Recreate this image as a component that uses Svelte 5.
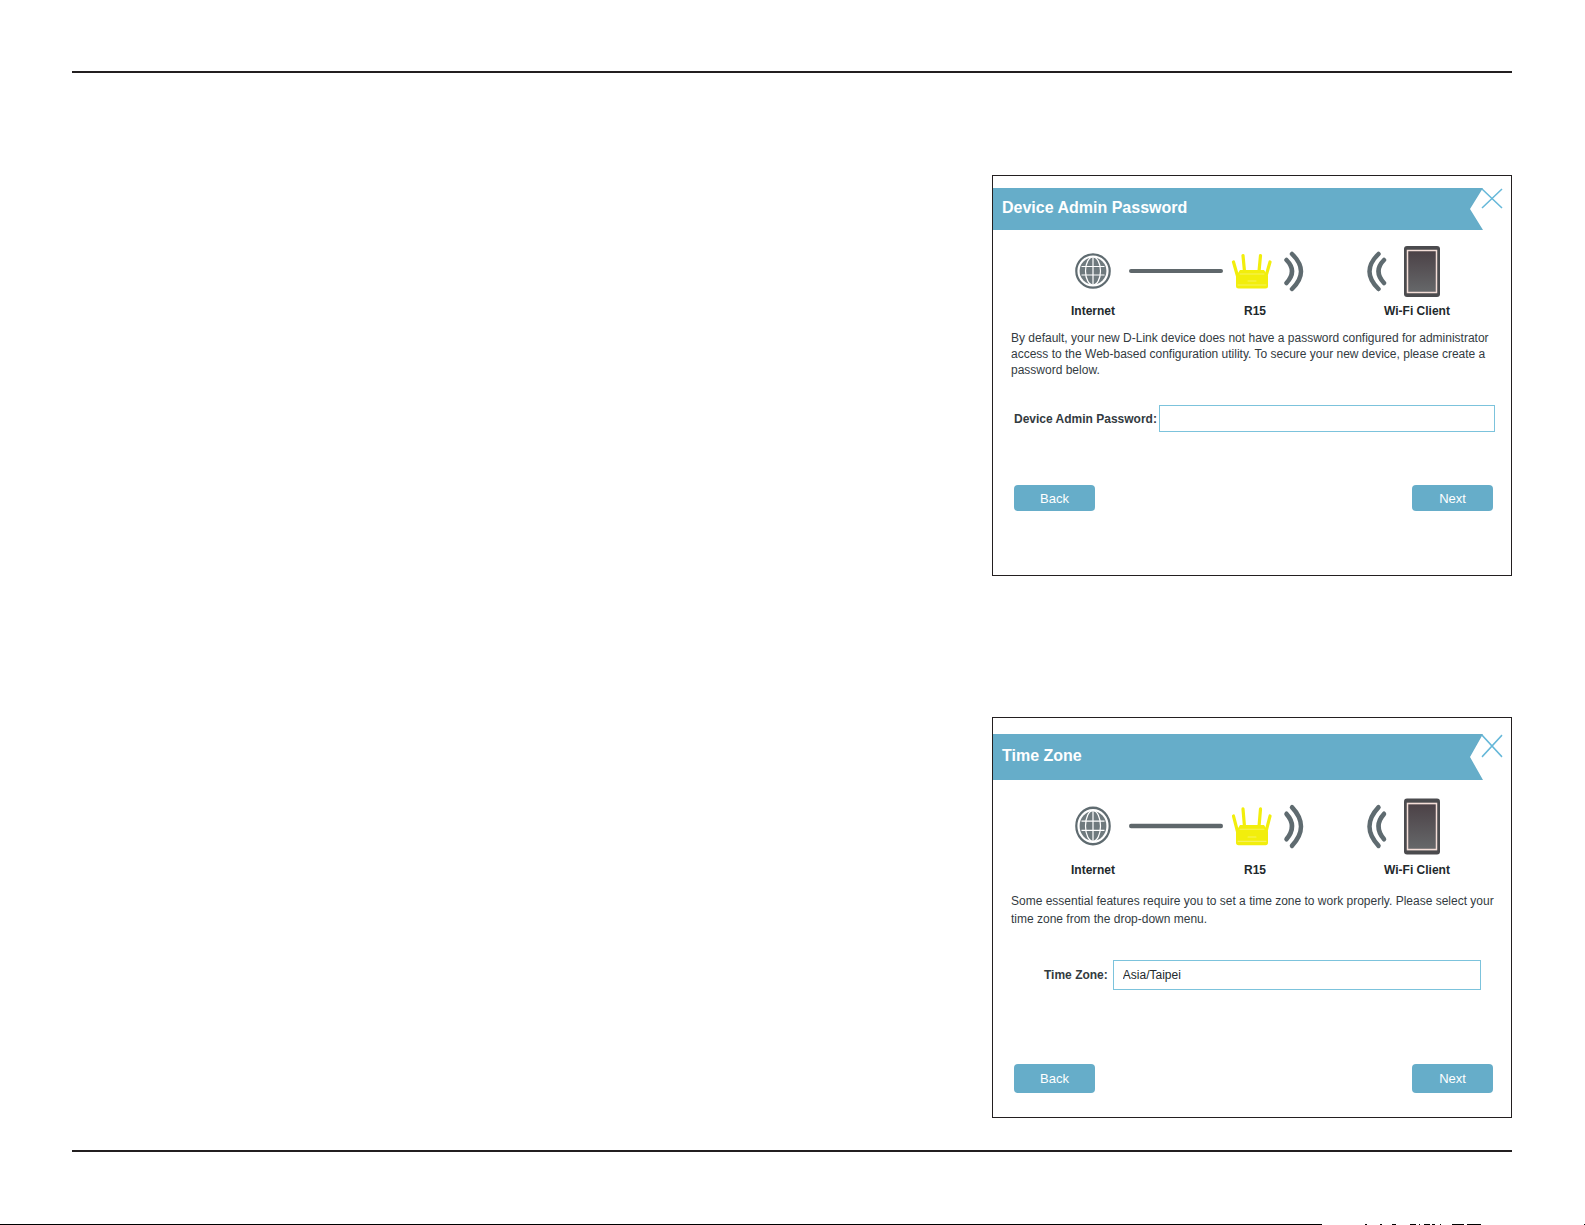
<script>
    let password = '';
    let timezone = 'Asia/Taipei';
</script>

{#snippet banner(title)}
    <header class="banner">
        <h2>{title}</h2>
        <button class="close" type="button" aria-label="Close">
            <svg viewBox="0 0 22 22" preserveAspectRatio="none">
                <path d="M1 1 L21 21 M21 1 L1 21" />
            </svg>
        </button>
    </header>
{/snippet}

{#snippet diagram()}
    <div class="diagram">
        <svg viewBox="0 0 518 62" preserveAspectRatio="none" aria-hidden="true">
            <defs>
                <linearGradient id="screen" x1="0" y1="0" x2="0" y2="1">
                    <stop offset="0" stop-color="#4b4146" />
                    <stop offset="1" stop-color="#66686a" />
                </linearGradient>
            </defs>

            <!-- globe -->
            <g fill="none" stroke="#5f6b70">
                <circle cx="100" cy="31" r="16.700" stroke-width="2.200" />
                <circle cx="100" cy="31" r="13.400" fill="#6f7a7e" stroke="none" />
                <g stroke="#fff" stroke-width="1.200">
                    <ellipse cx="100" cy="31" rx="7.500" ry="14" />
                    <path d="M100 17.500v27M88.500 26.500h23M88.500 35h23" />
                </g>
            </g>

            <path d="M138 31h90" stroke="#5f676b" stroke-width="4" stroke-linecap="round" />

            <!-- router -->
            <g stroke="#f2ee0c" stroke-linecap="round" fill="#f2ee0c">
                <path d="M240.500 22l4 14M250 15.500l1.500 16M267.500 15.500l-1.500 16M277 22l-4 14" stroke-width="3.200" />
                <path d="M247 30h24l4 6v10q0 2.500 -2.500 2.500h-27q-2.500 0 -2.500 -2.500v-10z" stroke="none" />
                <path d="M247 34h24M245 45h28M255 41h8" stroke="#f6f35c" stroke-width="1" />
            </g>

            <!-- radio waves -->
            <g fill="none" stroke="#5f6b70" stroke-width="4.500" stroke-linecap="round">
                <path d="M293.500 20q11 11 0 23M299 14q18 17.500 0 35" />
                <path d="M391 20q-11 11 0 23M385.500 14q-18 17.500 0 35" />
            </g>

            <!-- tablet -->
            <rect x="411" y="6" width="36" height="51" rx="3" fill="#4b4b4e" />
            <rect x="414.500" y="10.500" width="29" height="42" fill="url(#screen)" stroke="#f4ded8" stroke-width="1.500" />
        </svg>
        <div class="names">
            <span>Internet</span>
            <span>R15</span>
            <span>Wi-Fi Client</span>
        </div>
    </div>
{/snippet}

<main class="page">
    <section class="card">
        {@render banner('Device Admin Password')}
        {@render diagram()}
        <p>
            By default, your new D-Link device does not have a password configured for administrator
            access to the Web-based configuration utility. To secure your new device, please create a
            password below.
        </p>
        <div class="field">
            <label for="password">Device Admin Password:</label>
            <input id="password" type="text" bind:value={password} />
        </div>
        <div class="actions">
            <button type="button">Back</button>
            <button type="button">Next</button>
        </div>
    </section>

    <section class="card tall">
        {@render banner('Time Zone')}
        {@render diagram()}
        <p>
            Some essential features require you to set a time zone to work properly. Please select your
            time zone from the drop-down menu.
        </p>
        <div class="field">
            <label for="timezone">Time Zone:</label>
            <select id="timezone" bind:value={timezone}>
                <option>Asia/Taipei</option>
            </select>
        </div>
        <div class="actions">
            <button type="button">Back</button>
            <button type="button">Next</button>
        </div>
    </section>
</main>

<!-- broken line along the bottom edge -->
<svg class="edge" viewBox="0 0 1585 1" preserveAspectRatio="none" aria-hidden="true">
    <path d="M0 0h1322v1h-1322zM1365 0h2v1h-2zM1380 0h2v1h-2zM1392 0h4v1h-4zM1410 0h6v1h-6zM1419 0h1v1h-1zM1424 0h6v1h-6zM1432 0h3v1h-3zM1440 0h1v1h-1zM1452 0h12v1h-12zM1467 0h14v1h-14zM1584 0h1v1h-1z" />
</svg>

<style>
    :global(body) {
        background: #fff;
        font-family: "Liberation Sans", Arial, sans-serif;
        font-size: 12px;
        color: #333b3f;
    }

    .page {
        display: flex;
        flex-direction: column;
        align-items: flex-end;
        gap: 141px;
        margin: 71px 73px 0 72px;
        padding: 102px 0 32px;
        border-top: 2px solid #231f20;
        border-bottom: 2px solid #231f20;
    }

    .card {
        box-sizing: border-box;
        width: 520px;
        max-width: 100%;
        padding: 12px 0 64px;
        border: 1px solid #231f20;
        background: #fff;
    }

    .banner {
        position: relative;
        display: flex;
        align-items: center;
        height: 42px;
    }

    .banner::before {
        content: '';
        position: absolute;
        inset: 0 28px 0 0;
        background: #66adc9;
        clip-path: polygon(0 0, 100% 0, calc(100% - 13px) 50%, 100% 100%, 0 100%);
    }

    h2 {
        position: relative;
        margin: 0;
        padding: 0 9px 2px;
        font-size: 16px;
        line-height: 20px;
        color: #fff;
    }

    .close {
        position: absolute;
        top: 0;
        right: 8px;
        width: 22px;
        height: 21px;
        padding: 0;
        border: none;
        background: none;
        cursor: pointer;
    }

    .close svg {
        display: block;
        width: 100%;
        height: 100%;
        fill: none;
        stroke: #66b8d9;
        stroke-width: 1.5;
    }

    .diagram svg {
        display: block;
        width: 100%;
        height: 62px;
        margin-top: 10px;
    }

    .names {
        display: grid;
        grid-template-columns: repeat(3, 162px);
        justify-content: center;
        margin-top: 2px;
        padding-left: 6px;
        font-weight: bold;
        line-height: 14px;
        text-align: center;
        color: #22292c;
    }

    p {
        margin: 12px 16px 0 18px;
        line-height: 16px;
    }

    .field {
        display: flex;
        align-items: center;
        gap: 2px;
        margin: 27px 16px 0 21px;
    }

    label {
        font-weight: bold;
    }

    input,
    select {
        flex: 1;
        box-sizing: border-box;
        min-width: 0;
        height: 27px;
        padding: 0 9px;
        border: 1px solid #7cc3dc;
        border-radius: 0;
        background: #fff;
        font: inherit;
        color: #22292c;
        appearance: none;
    }

    .actions {
        display: flex;
        justify-content: space-between;
        margin: 53px 18px 0 21px;
    }

    .actions button {
        width: 81px;
        height: 26px;
        padding: 0;
        border: none;
        border-radius: 4px;
        background: #66adc9;
        font: inherit;
        font-size: 13px;
        color: #fff;
        cursor: pointer;
    }

    .tall {
        padding: 16px 0 24px;
    }

    .tall .banner {
        height: 46px;
    }

    .tall .close {
        height: 24px;
    }

    .tall .diagram svg {
        height: 68px;
        margin-top: 12px;
    }

    .tall .names {
        margin-top: 3px;
    }

    .tall p {
        margin-top: 15px;
        line-height: 18px;
    }

    .tall .field {
        gap: 5px;
        margin: 32px 30px 0 51px;
    }

    .tall select {
        height: 30px;
    }

    .tall .actions {
        margin-top: 74px;
    }

    .tall .actions button {
        height: 29px;
    }

    .edge {
        display: block;
        width: 100%;
        height: 1px;
        margin-top: 72px;
    }
</style>
